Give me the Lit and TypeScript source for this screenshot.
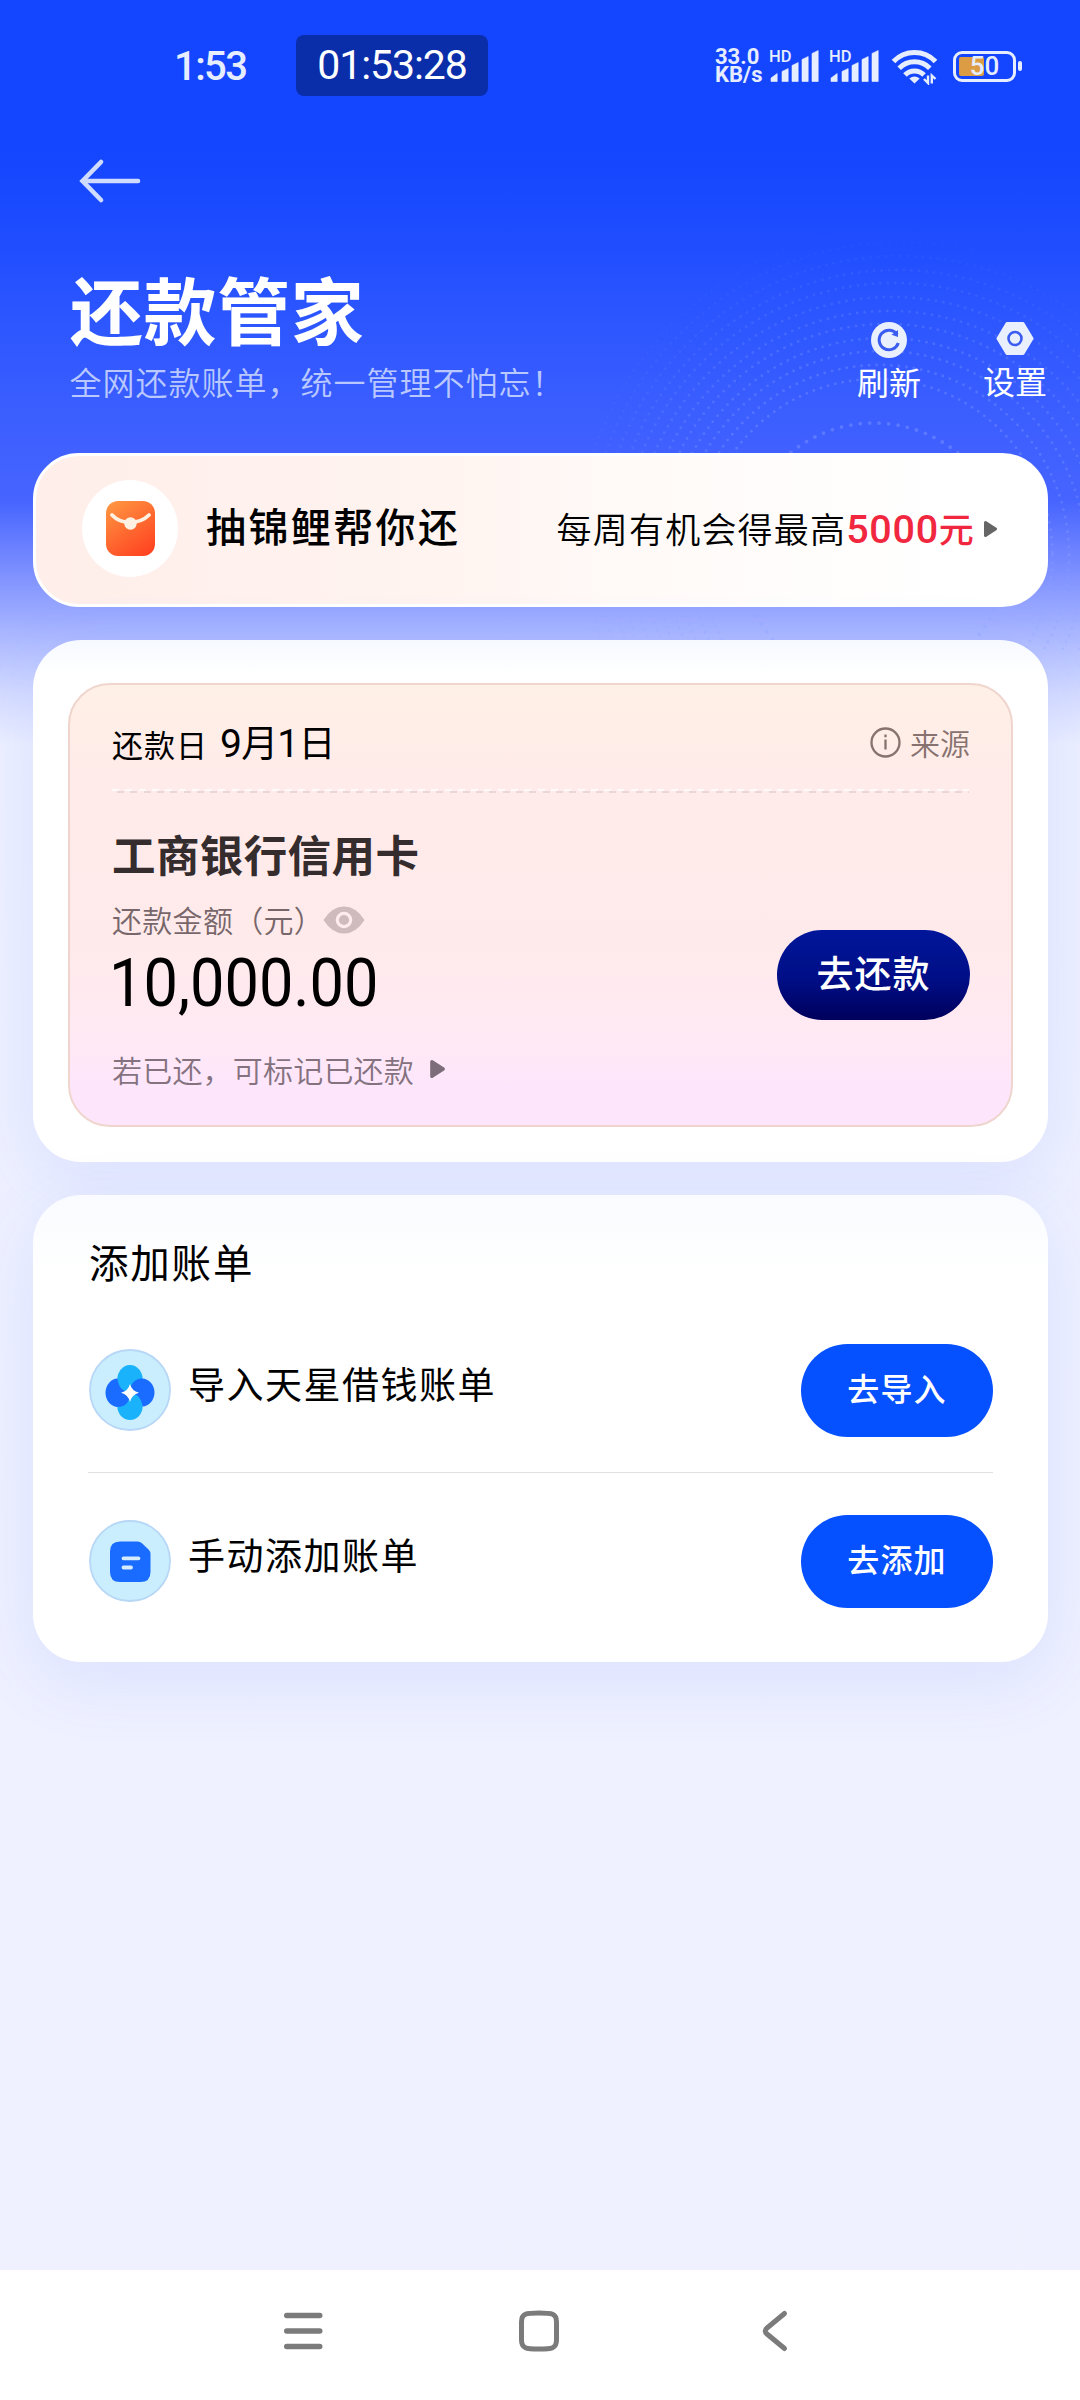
import { LitElement, html, css, svg } from "lit";
import { customElement } from "lit/decorators.js";

const HALO_RINGS = [132, 176, 190, 204, 217, 231, 244, 258, 272, 285, 299, 313, 327];

const SIGNAL_BARS = [
  { x: 2, top: 23.5, slope: 3.5 },
  { x: 13, top: 18.5, slope: 2 },
  { x: 23, top: 12.5, slope: 2 },
  { x: 33, top: 6.5, slope: 2 },
  { x: 43, top: 0.5, slope: 2 },
];

const backArrow = svg`
  <svg class="back" width="64" height="46" viewBox="0 0 64 46" fill="none" stroke="#cfdcff" stroke-width="4.6" stroke-linecap="round">
    <path d="M23 4 4.500 23 23 42"/><path d="M6 23H60"/>
  </svg>`;

const wifi = svg`
  <svg class="wifi" width="47" height="36" viewBox="0 0 47 36" fill="none" stroke="#e6edff">
    <path d="M2.500 12.500A29 29 0 0 1 44.500 12.500" stroke-width="5"/>
    <path d="M8.200 19.200A21.500 21.500 0 0 1 38.800 19.200" stroke-width="5"/>
    <path d="M14 26A13.200 13.200 0 0 1 33 26" stroke-width="5"/>
    <path d="M23.500 34.500 18.300 29.500Q23.500 25.500 28.700 29.500Z" fill="#e6edff" stroke="none"/>
    <path d="M33 30 37 34V26.500M44.500 30 40.800 26.500V34.500" stroke-width="2.400"/>
  </svg>`;

const signal = svg`
  <svg class="bars" width="50" height="32" viewBox="0 0 50 32" fill="#e6edff">
    ${SIGNAL_BARS.map(
      (b) => svg`<path d="M${b.x} 31.500V${b.top + b.slope + 1}L${b.x + 6.2} ${b.top}V31.500Z" stroke="#e6edff" stroke-width="0.600" stroke-linejoin="round"/>`
    )}
  </svg>`;

const refreshIcon = svg`
  <svg width="36" height="36" viewBox="0 0 36 36">
    <circle cx="18" cy="18" r="18" fill="#e9effd"/>
    <path d="M26.200 12.600A9.800 9.800 0 1 0 27.300 21" fill="none" stroke="#3a5cf0" stroke-width="3"/>
    <path d="M20.500 12.800 27 8V15Z" fill="#3a5cf0"/>
  </svg>`;

const settingsIcon = svg`
  <svg width="38" height="33" viewBox="0 0 38 33">
    <path d="M11 1.500H27L36 16.500 27 31.500H11L2 16.500Z" fill="#e9effd" stroke="#e9effd" stroke-width="3" stroke-linejoin="round"/>
    <circle cx="19" cy="16.500" r="6.500" fill="none" stroke="#3a5cf0" stroke-width="2.600"/>
  </svg>`;

const packetIcon = svg`
  <svg width="49" height="55" viewBox="0 0 49 55">
    <defs><linearGradient id="packet" x1="0.2" y1="0" x2="0.8" y2="1">
      <stop offset="0" stop-color="#ff9340"/><stop offset="0.5" stop-color="#ff6a30"/><stop offset="1" stop-color="#ff4321"/>
    </linearGradient></defs>
    <rect width="49" height="55" rx="12" fill="url(#packet)"/>
    <path d="M6 14Q13 21.500 24.500 21.500Q36 21 43 14" fill="none" stroke="#fff1e2" stroke-width="3.800" stroke-linecap="round"/>
    <circle cx="24.500" cy="22.500" r="6.200" fill="#fff1e2"/>
  </svg>`;

const infoIcon = svg`
  <svg width="31" height="31" viewBox="0 0 31 31" fill="none" stroke="#87726f" stroke-width="2.300">
    <circle cx="15.500" cy="15.500" r="14"/><path d="M15.500 12.500V22.500M15.500 7.500V10.200"/>
  </svg>`;

const eyeIcon = svg`
  <svg class="eye" width="42" height="28" viewBox="0 0 42 28">
    <path d="M0.500 14Q9 0.500 21 0.500T41.500 14Q33 27.500 21 27.500T0.500 14Z" fill="#cfbabd"/>
    <circle cx="21" cy="14" r="6.700" fill="#cfbabd" stroke="#ffebec" stroke-width="3.200"/>
  </svg>`;

const importIcon = svg`
  <svg width="82" height="82" viewBox="0 0 82 82">
    <circle cx="41" cy="41" r="40" fill="#cbeeff" stroke="#b7d7f6" stroke-width="1.800"/>
    <ellipse cx="41" cy="30.500" rx="12.700" ry="14.500" fill="#19b2fb"/>
    <ellipse cx="41" cy="57" rx="12.700" ry="14" fill="#19b2fb"/>
    <path d="M40.500 44C40.500 35 46 29.500 53 29.500C60 29.500 65.500 36 65.500 43.500C65.500 51 60 57.500 53.500 57.500C52.500 49 48.500 44.500 40.500 44Z" fill="#1a6bff"/>
    <path d="M41 43C41.500 53 36 58 29 58C22 58 16.500 51.500 16.500 44C16.500 36.500 22 29.500 28.500 29.500C29.500 38 33 42.500 41 43Z" fill="#1a6bff"/>
    <path d="M41 35Q42.800 42 50 43.700Q42.800 45.500 41 53Q39.200 45.500 32 43.700Q39.200 42 41 35Z" fill="#fff"/>
  </svg>`;

const manualIcon = svg`
  <svg width="82" height="82" viewBox="0 0 82 82">
    <circle cx="41" cy="41" r="40" fill="#cbeeff" stroke="#b7d7f6" stroke-width="1.800"/>
    <path d="M31 21.500H48.500Q51 21.500 53 23.300L59.500 29.500Q61.500 31.500 61.500 34V52Q61.500 62 51.500 62H31Q21 62 21 52V31.500Q21 21.500 31 21.500Z" fill="#1a6bff"/>
    <path d="M34.500 38.300H49.500M34.500 47.500H42" stroke="#d6ecff" stroke-width="3.800" stroke-linecap="round"/>
  </svg>`;

@customElement("bill-row")
class BillRow extends LitElement {
  static properties = { label: {}, action: {}, icon: { attribute: false } };
  declare label: string;
  declare action: string;
  declare icon: unknown;

  static styles = css`
    :host { display: flex; align-items: center; height: 94px; }
    .icon { display: flex; width: 82px; margin: 0 0 0 1px; }
    .label {
      flex: 1; margin: 0 0 14px 17px; line-height: 46px;
      font-size: 37px; letter-spacing: 1.5px; color: #000;
    }
    .go {
      width: 192px; height: 93px; padding: 0 0 7px; border: 0; border-radius: 47px;
      background: #0550ff; color: #fff; font: inherit; font-size: 32px; letter-spacing: 1.2px; font-weight: 450;
    }
  `;

  render() {
    return html`
      <span class="icon">${this.icon}</span>
      <span class="label">${this.label}</span>
      <button class="go">${this.action}</button>
    `;
  }
}

@customElement("app-root")
class AppRoot extends LitElement {
  static styles = css`
    :host {
      display: block;
      font-family: "Noto Sans CJK SC", "Noto Sans", sans-serif;
      color: #000;
    }
    * { box-sizing: border-box; }
    svg { display: block; flex: none; }
    .num { font-family: Roboto, "Noto Sans CJK SC", sans-serif; }
    .page {
      position: relative; width: 1080px; height: 2400px; overflow: hidden;
      display: flex; flex-direction: column;
      background: linear-gradient(180deg,
        #1446ff 0, #1446ff 150px, #1f4dff 240px, #2e57ff 330px, #3f60ff 440px, #4664ff 500px,
        #7488ff 560px, #98a7ff 610px, #b2beff 645px, #d5dcff 695px, #edf0ff 745px, #eff1ff 100%);
    }
    .halo { position: absolute; left: 560px; top: 220px; }

    .status { position: relative; height: 132px; display: flex; align-items: center; color: #e6edff; }
    .clock { margin-left: 174px; width: 122px; font-size: 40px; font-weight: 500; letter-spacing: -1.6px; line-height: 60px; padding-top: 2px; }
    .timer {
      width: 192px; height: 61px; margin-bottom: 1px; border-radius: 8px; background: #0a2da9; color: #fff;
      font-size: 41px; line-height: 61px; text-align: center; letter-spacing: -1.1px;
    }
    .speed { margin-left: 227px; width: 54px; font-size: 22px; line-height: 18.5px; font-weight: 700; }
    .speed span { display: block; }
    .cell { display: flex; width: 60px; height: 33px; }
    .hd { width: 24px; margin-right: -24px; font-size: 16.5px; line-height: 14px; font-weight: 500; }
    .wifi { margin: 2px 15px 0 2px; }
    .battery {
      position: relative; width: 63px; height: 31px; border: 3.5px solid #e6edff; border-radius: 9px;
      padding: 3px; display: flex;
    }
    .level { width: 25px; background: #dc9c43; border-radius: 2px; }
    .percent { position: absolute; inset: 0; text-align: center; font-size: 26px; line-height: 25px; font-weight: 500; }
    .cap { width: 4px; height: 10px; margin-left: 2px; border-radius: 2px; background: #e6edff; }

    .nav { position: relative; height: 136px; padding: 26px 0 0 78px; }

    .hero { position: relative; height: 185px; padding: 0 33px 0 70px; display: flex; justify-content: space-between; color: #fff; }
    .title { margin: 0; font-size: 73px; line-height: 78px; font-weight: 700; letter-spacing: 0.6px; }
    .subtitle { margin: 15px 0 0 -0.5px; font-size: 32px; line-height: 40px; letter-spacing: 1px; color: #b9c8ff; font-weight: 350; }
    .tools { display: flex; gap: 62px; margin-top: 54px; }
    .tool { display: flex; flex-direction: column; align-items: center; gap: 3px; font-size: 32px; line-height: 40px; }
    .tool.set { gap: 5px; }

    .banner {
      position: relative; margin: 0 32px 0 33px; height: 154px; padding: 0 48px 3px 46px;
      display: flex; align-items: center; border: 3px solid #fff; border-radius: 46px;
      background: linear-gradient(90deg, #ffeeea 0, #fff4f0 40%, #fffaf8 60%, #fff 90%);
    }
    .coin { width: 96px; height: 97px; border-radius: 50%; background: #fff; display: grid; place-items: center; }
    .promo { margin: 0 0 7px 28px; flex: 1; font-size: 40px; line-height: 48px; font-weight: 500; letter-spacing: 2.4px; white-space: nowrap; }
    .prize { font-size: 35px; line-height: 44px; letter-spacing: 1.2px; white-space: nowrap; font-weight: 350; }
    .win { color: #f0273f; font-weight: 500; }
    .win .num { font-size: 39.5px; letter-spacing: 0.7px; }
    .tri { margin-left: 9px; }

    .card {
      position: relative; margin: 33px 32px 0 33px; border-radius: 48px;
      background: linear-gradient(180deg, #f6f9ff 0, #fff 34px);
      box-shadow: 0 18px 70px rgba(70, 110, 255, 0.11);
    }
    .due { height: 522px; padding: 43px 35px 0; }
    .loan {
      height: 444px; padding: 0 41px 0 42px; border: 2px solid #efd5cd; border-radius: 42px;
      background: linear-gradient(180deg, #fff0e6 0, #ffebea 22%, #ffeaeb 60%, #ffe9f4 80%, #fde6fc 92%);
    }
    .top { display: flex; justify-content: space-between; align-items: center; height: 104px; padding-top: 10px; }
    .date { font-size: 31px; line-height: 44px; letter-spacing: 1px; white-space: nowrap; }
    .day { font-size: 37px; font-weight: 400; letter-spacing: -0.8px; margin-left: 12px; }
    .day .num { font-size: 39px; font-weight: 400; }
    .source { display: flex; align-items: center; gap: 9px; font-size: 30px; line-height: 36px; color: #87726f; font-weight: 350; }
    .dash {
      height: 4px; margin-right: 1px;
      background:
        repeating-linear-gradient(90deg, #fffafa 0 7px, transparent 7px 13.3px) 0 0 / 100% 2px no-repeat,
        repeating-linear-gradient(90deg, transparent 0 5px, #ead5d8 5px 12px, transparent 12px 13.3px) 0 2px / 100% 2px no-repeat;
    }
    .bank { margin: 36px 0 0; font-size: 43.5px; line-height: 50px; font-weight: 700; letter-spacing: 0.4px; color: #352c2e; }
    .sum { display: flex; justify-content: space-between; margin-top: 22px; height: 120px; }
    .caption { display: flex; align-items: center; font-size: 30px; line-height: 36px; letter-spacing: 0.3px; color: #77666a; font-weight: 350; }
    .eye { margin-left: -1px; margin-top: 2px; }
    .amount {
      margin-top: 18px; font-size: 67px; line-height: 56px; font-weight: 400;
      transform: scaleX(0.915); transform-origin: 0 50%; margin-left: -3px; width: 290px;
    }
    .repay {
      margin-top: 29px; width: 193px; height: 90px; padding: 0 0 6px; border: 0; border-radius: 45px;
      background: linear-gradient(180deg, #00169a 0, #000e86 55%, #00005c 100%);
      color: #fff; font: inherit; font-size: 37px; font-weight: 450; letter-spacing: 1px;
    }
    .mark { display: flex; align-items: center; gap: 16px; margin-top: 30px; font-size: 30px; line-height: 36px; letter-spacing: 0.2px; color: #85727f; font-weight: 350; }

    .add { height: 467px; padding: 41px 55px 0; background: linear-gradient(180deg, #f9fbff 0, #fff 80px); }
    .heading { margin: 0 0 57px; padding-left: 1px; font-size: 39.5px; line-height: 50px; font-weight: 400; letter-spacing: 1.8px; }
    .rule { height: 1px; margin: 35px 0 41px; background: #e0e0e2; }

    .keys { position: relative; margin-top: auto; height: 130px; background: #fff; display: flex; padding: 38px 0 0 282px; }
    .keys svg { margin-right: 191px; }
  `;

  private halo() {
    return svg`
      <svg class="halo" width="520" height="430" viewBox="0 0 520 430" fill="none">
        <defs>
          <radialGradient id="fadeOut" gradientUnits="userSpaceOnUse" cx="320" cy="335" r="330">
            <stop offset="0.4" stop-color="#fff"/><stop offset="0.7" stop-color="#aaa"/><stop offset="1" stop-color="#000"/>
          </radialGradient>
          <mask id="fade"><rect width="520" height="430" fill="url(#fadeOut)"/></mask>
        </defs>
        <g mask="url(#fade)" stroke="#8fa6ff" stroke-opacity="0.36" stroke-linecap="round">
          ${HALO_RINGS.map(
            (r, i) => svg`<circle cx="${314 + i * 2.5}" cy="335" r="${r}" stroke-width="${i ? 2.9 : 3.8}" stroke-dasharray="0 ${i ? 7.5 : 9.5}"/>`
          )}
        </g>
      </svg>`;
  }

  private triangle(w: number, h: number, color: string, cls = "") {
    return svg`<svg class="${cls}" width="${w}" height="${h}" viewBox="0 0 13 16">
      <path d="M1.500 1.500 11.500 8 1.500 14.500Z" fill="${color}" stroke="${color}" stroke-width="3" stroke-linejoin="round"/>
    </svg>`;
  }

  render() {
    return html`
      <div class="page">
        ${this.halo()}
        <div class="status num">
          <span class="clock">1:53</span>
          <span class="timer">01:53:28</span>
          <span class="speed"><span>33.0</span><span>KB/s</span></span>
          <span class="cell"><span class="hd">HD</span>${signal}</span>
          <span class="cell"><span class="hd">HD</span>${signal}</span>
          ${wifi}
          <span class="battery"><span class="level"></span><span class="percent">50</span></span>
          <span class="cap"></span>
        </div>
        <div class="nav">${backArrow}</div>
        <header class="hero">
          <div>
            <h1 class="title">还款管家</h1>
            <p class="subtitle">全网还款账单，统一管理不怕忘！</p>
          </div>
          <div class="tools">
            <div class="tool">${refreshIcon}<span>刷新</span></div>
            <div class="tool set">${settingsIcon}<span>设置</span></div>
          </div>
        </header>

        <div class="banner">
          <span class="coin">${packetIcon}</span>
          <span class="promo">抽锦鲤帮你还</span>
          <span class="prize">每周有机会得最高<span class="win"><span class="num">5000</span>元</span></span>
          ${this.triangle(13, 16, "#666", "tri")}
        </div>

        <section class="card due">
          <div class="loan">
            <div class="top">
              <span class="date">还款日<span class="day"><span class="num">9</span>月<span class="num">1</span>日</span></span>
              <span class="source">${infoIcon}来源</span>
            </div>
            <div class="dash"></div>
            <h2 class="bank">工商银行信用卡</h2>
            <div class="sum">
              <div>
                <div class="caption">还款金额（元）${eyeIcon}</div>
                <div class="amount num">10,000.00</div>
              </div>
              <button class="repay">去还款</button>
            </div>
            <div class="mark">若已还，可标记已还款${this.triangle(15, 18, "#7d6c79")}</div>
          </div>
        </section>

        <section class="card add">
          <h2 class="heading">添加账单</h2>
          <bill-row label="导入天星借钱账单" action="去导入" .icon=${importIcon}></bill-row>
          <div class="rule"></div>
          <bill-row label="手动添加账单" action="去添加" .icon=${manualIcon}></bill-row>
        </section>

        <nav class="keys">
          <svg width="43" height="46" viewBox="0 0 43 46" stroke="#7b7b7b" stroke-width="5.400" stroke-linecap="round">
            <path d="M4.700 7.500H37.800M4.700 23H37.800M4.700 38.500H37.800"/>
          </svg>
          <svg width="46" height="46" viewBox="0 0 46 46" fill="none" stroke="#7b7b7b" stroke-width="5">
            <path d="M23 5C36 5 40.500 5.500 40.500 14V32C40.500 40.500 36 41 23 41S5.500 40.500 5.500 32V14C5.500 5.500 10 5 23 5Z"/>
          </svg>
          <svg width="40" height="46" viewBox="0 0 40 46" fill="none" stroke="#7b7b7b" stroke-width="5" stroke-linecap="round">
            <path d="M31.500 5.500 14 20Q10.500 23 14 26L31.500 40.500"/>
          </svg>
        </nav>
      </div>
    `;
  }
}
